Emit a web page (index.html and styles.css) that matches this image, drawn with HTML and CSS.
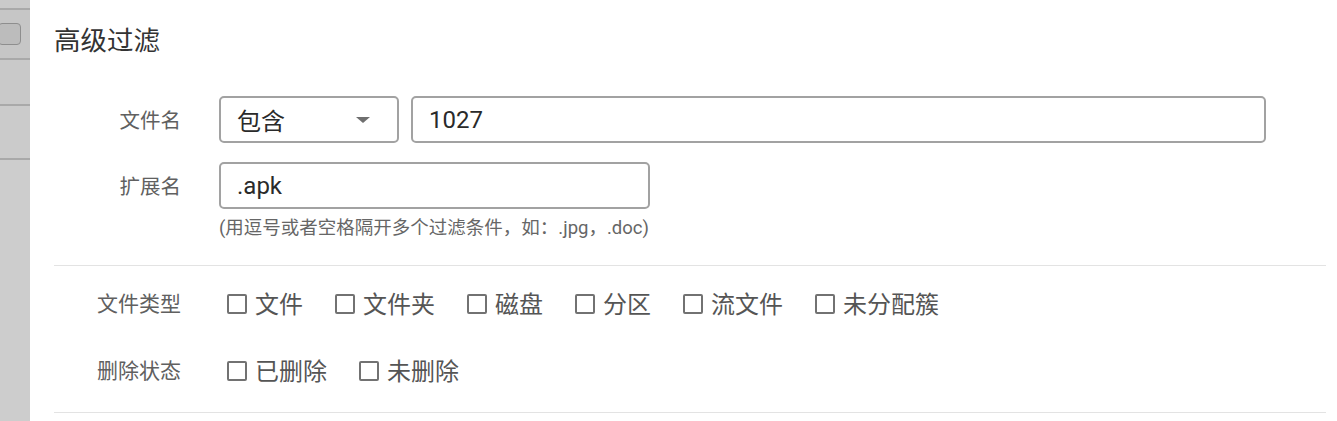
FILE: index.html
```html
<!DOCTYPE html>
<html lang="zh">
<head>
<meta charset="utf-8">
<link rel="stylesheet" href="styles.css">
</head>
<body>
<div class="page">
  <aside class="side">
    <div class="side-row r1"></div>
    <div class="side-row r2"><span class="side-check"></span></div>
    <div class="side-row r3"></div>
    <div class="side-row r4"></div>
    <div class="side-row r5"></div>
  </aside>
  <main class="main">
    <h1 class="title">高级过滤</h1>
    <section class="form">
      <div class="frow">
        <label class="flabel">文件名</label>
        <div class="controls">
          <div class="select"><span>包含</span><span class="caret"></span></div>
          <div class="input grow">1027</div>
        </div>
      </div>
      <div class="frow second">
        <label class="flabel">扩展名</label>
        <div class="controls col">
          <div class="input ext">.apk</div>
          <div class="hint">(用逗号或者空格隔开多个过滤条件，如：.jpg，.doc)</div>
        </div>
      </div>
    </section>
    <section class="checks">
      <div class="crow">
        <span class="clabel">文件类型</span>
        <div class="opts">
          <span class="opt"><span class="box"></span>文件</span>
          <span class="opt"><span class="box"></span>文件夹</span>
          <span class="opt"><span class="box"></span>磁盘</span>
          <span class="opt"><span class="box"></span>分区</span>
          <span class="opt"><span class="box"></span>流文件</span>
          <span class="opt"><span class="box"></span>未分配簇</span>
        </div>
      </div>
      <div class="crow">
        <span class="clabel">删除状态</span>
        <div class="opts">
          <span class="opt"><span class="box"></span>已删除</span>
          <span class="opt"><span class="box"></span>未删除</span>
        </div>
      </div>
    </section>
  </main>
</div>
</body>
</html>
```

FILE: styles.css
```css
html, body {
  margin: 0;
  padding: 0;
  background: #ffffff;
}
body {
  font-family: Roboto, "Noto Sans CJK SC", sans-serif;
  color: #333;
}
.page {
  display: flex;
  width: 1337px;
  height: 421px;
  overflow: hidden;
}
.side {
  width: 30px;
  flex: none;
  background: #cdcdcd;
  display: flex;
  flex-direction: column;
}
.side-row {
  border-bottom: 2px solid #a9a9a9;
  position: relative;
}
.r1 { height: 8px; background: #cacaca; }
.r2 { height: 48px; background: #c6c6c6; }
.r3 { height: 44px; background: #c9c9c9; }
.r4 { height: 52px; background: #cbcbcb; }
.r5 { flex: 1; border-bottom: none; }
.side-check {
  position: absolute;
  left: -2px;
  top: 13px;
  width: 21px;
  height: 20px;
  border: 1px solid #8e8e8e;
  border-radius: 4px;
  background: #bcbcbc;
}
.main {
  flex: 1;
  padding-left: 24px;
  padding-right: 11px;
}
.title {
  margin: 0;
  height: 76px;
  display: flex;
  align-items: center;
  font-size: 26.5px;
  font-weight: normal;
  color: #333;
  font-family: "Noto Sans CJK SC", sans-serif;
}
.form {
  padding-top: 20px;
  padding-bottom: 26px;
  border-bottom: 1px solid #e3e3e3;
}
.frow {
  display: flex;
  align-items: flex-start;
}
.frow.second { margin-top: 19px; }
.flabel {
  width: 127px;
  flex: none;
  text-align: right;
  font-size: 20.5px;
  color: #606060;
  line-height: 47px;
  font-family: "Noto Sans CJK SC", sans-serif;
  margin-right: 38px;
}
.controls {
  display: flex;
  gap: 12px;
  flex: 1;
  padding-right: 60px;
}
.controls.col {
  flex-direction: column;
  gap: 0;
}
.select, .input {
  box-sizing: border-box;
  height: 47px;
  border: 2px solid #a2a2a2;
  border-radius: 5px;
  display: flex;
  align-items: center;
  padding-left: 16px;
  font-size: 24px;
  color: #2a2a2a;
}
.select {
  width: 180px;
  justify-content: space-between;
  padding-right: 27px;
}
.caret {
  width: 0;
  height: 0;
  border-left: 7px solid transparent;
  border-right: 7px solid transparent;
  border-top: 6px solid #6f6f6f;
}
.input.grow { flex: 1; }
.input.ext { width: 431px; }
.hint {
  margin-top: 8px;
  font-size: 18.5px;
  line-height: 22px;
  color: #666;
}
.checks {
  padding-top: 16px;
  padding-bottom: 23px;
  border-bottom: 1px solid #e3e3e3;
}
.crow {
  display: flex;
  align-items: center;
  height: 40px;
}
.crow + .crow { margin-top: 27px; }
.clabel {
  width: 127px;
  flex: none;
  text-align: right;
  font-size: 21px;
  color: #606060;
  font-family: "Noto Sans CJK SC", sans-serif;
  margin-right: 46px;
}
.opts {
  display: flex;
  gap: 32px;
}
.opt {
  display: inline-flex;
  align-items: center;
  font-size: 24px;
  color: #555;
  font-family: "Noto Sans CJK SC", sans-serif;
}
.box {
  box-sizing: border-box;
  width: 20px;
  height: 20px;
  border: 2px solid #727272;
  border-radius: 2px;
  margin-right: 8px;
  margin-top: 4px;
}
```
